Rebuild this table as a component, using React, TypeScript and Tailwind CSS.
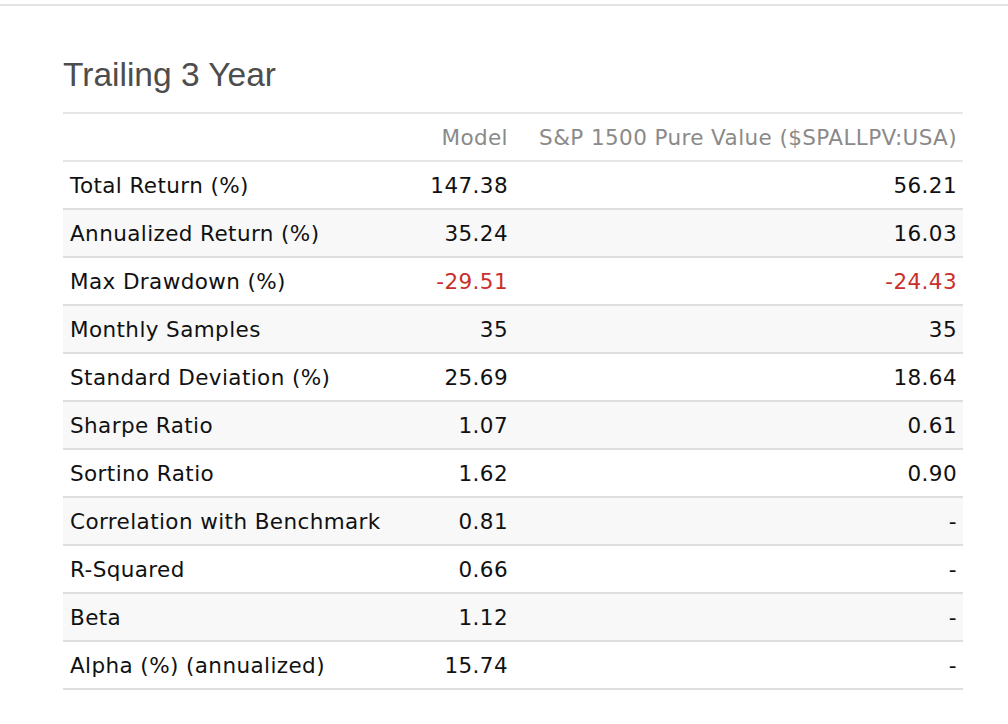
const rows: { label: string; model: string; bench: string; neg?: boolean }[] = [
  { label: "Total Return (%)", model: "147.38", bench: "56.21" },
  { label: "Annualized Return (%)", model: "35.24", bench: "16.03" },
  { label: "Max Drawdown (%)", model: "-29.51", bench: "-24.43", neg: true },
  { label: "Monthly Samples", model: "35", bench: "35" },
  { label: "Standard Deviation (%)", model: "25.69", bench: "18.64" },
  { label: "Sharpe Ratio", model: "1.07", bench: "0.61" },
  { label: "Sortino Ratio", model: "1.62", bench: "0.90" },
  { label: "Correlation with Benchmark", model: "0.81", bench: "-" },
  { label: "R-Squared", model: "0.66", bench: "-" },
  { label: "Beta", model: "1.12", bench: "-" },
  { label: "Alpha (%) (annualized)", model: "15.74", bench: "-" },
];

export default function App() {
  return (
    <div className="w-[1008px] h-[724px] bg-white overflow-hidden">
      <div className="mt-[4px] border-t-2 border-[#e3e3e3]" />
      <div className="pl-[63px]">
        <h1 className="mt-[49px] h-[57px] text-[33.5px] leading-[40px] text-[#4d4d4d] font-['Liberation_Sans',sans-serif] font-normal">
          Trailing 3 Year
        </h1>
        <table className="w-[900px] table-fixed border-collapse font-['DejaVu_Sans',Verdana,sans-serif] text-[21.5px] tracking-[0.4px] text-[#111]">
          <colgroup>
            <col className="w-[300px]" />
            <col className="w-[153px]" />
            <col className="w-[447px]" />
          </colgroup>
          <thead>
            <tr className="h-[48px] border-t-2 border-b-2 border-[#e6e6e6] text-[#8a8a8a]">
              <th />
              <th className="px-2 pt-[2px] text-right font-normal whitespace-nowrap">Model</th>
              <th className="px-[6px] pt-[2px] text-right font-normal whitespace-nowrap">
                S&amp;P 1500 Pure Value ($SPALLPV:USA)
              </th>
            </tr>
          </thead>
          <tbody>
            {rows.map((r, i) => (
              <tr
                key={r.label}
                className={`h-[48px] border-b-2 border-[#dedede] ${i % 2 === 1 ? "bg-[#f8f8f8]" : "bg-white"}`}
              >
                <td className="px-[7px] pt-[2px] text-left whitespace-nowrap">{r.label}</td>
                <td className={`px-2 pt-[2px] text-right ${r.neg ? "text-[#c9302c]" : ""}`}>{r.model}</td>
                <td className={`px-[6px] pt-[2px] text-right ${r.neg ? "text-[#c9302c]" : ""}`}>{r.bench}</td>
              </tr>
            ))}
          </tbody>
        </table>
      </div>
    </div>
  );
}
